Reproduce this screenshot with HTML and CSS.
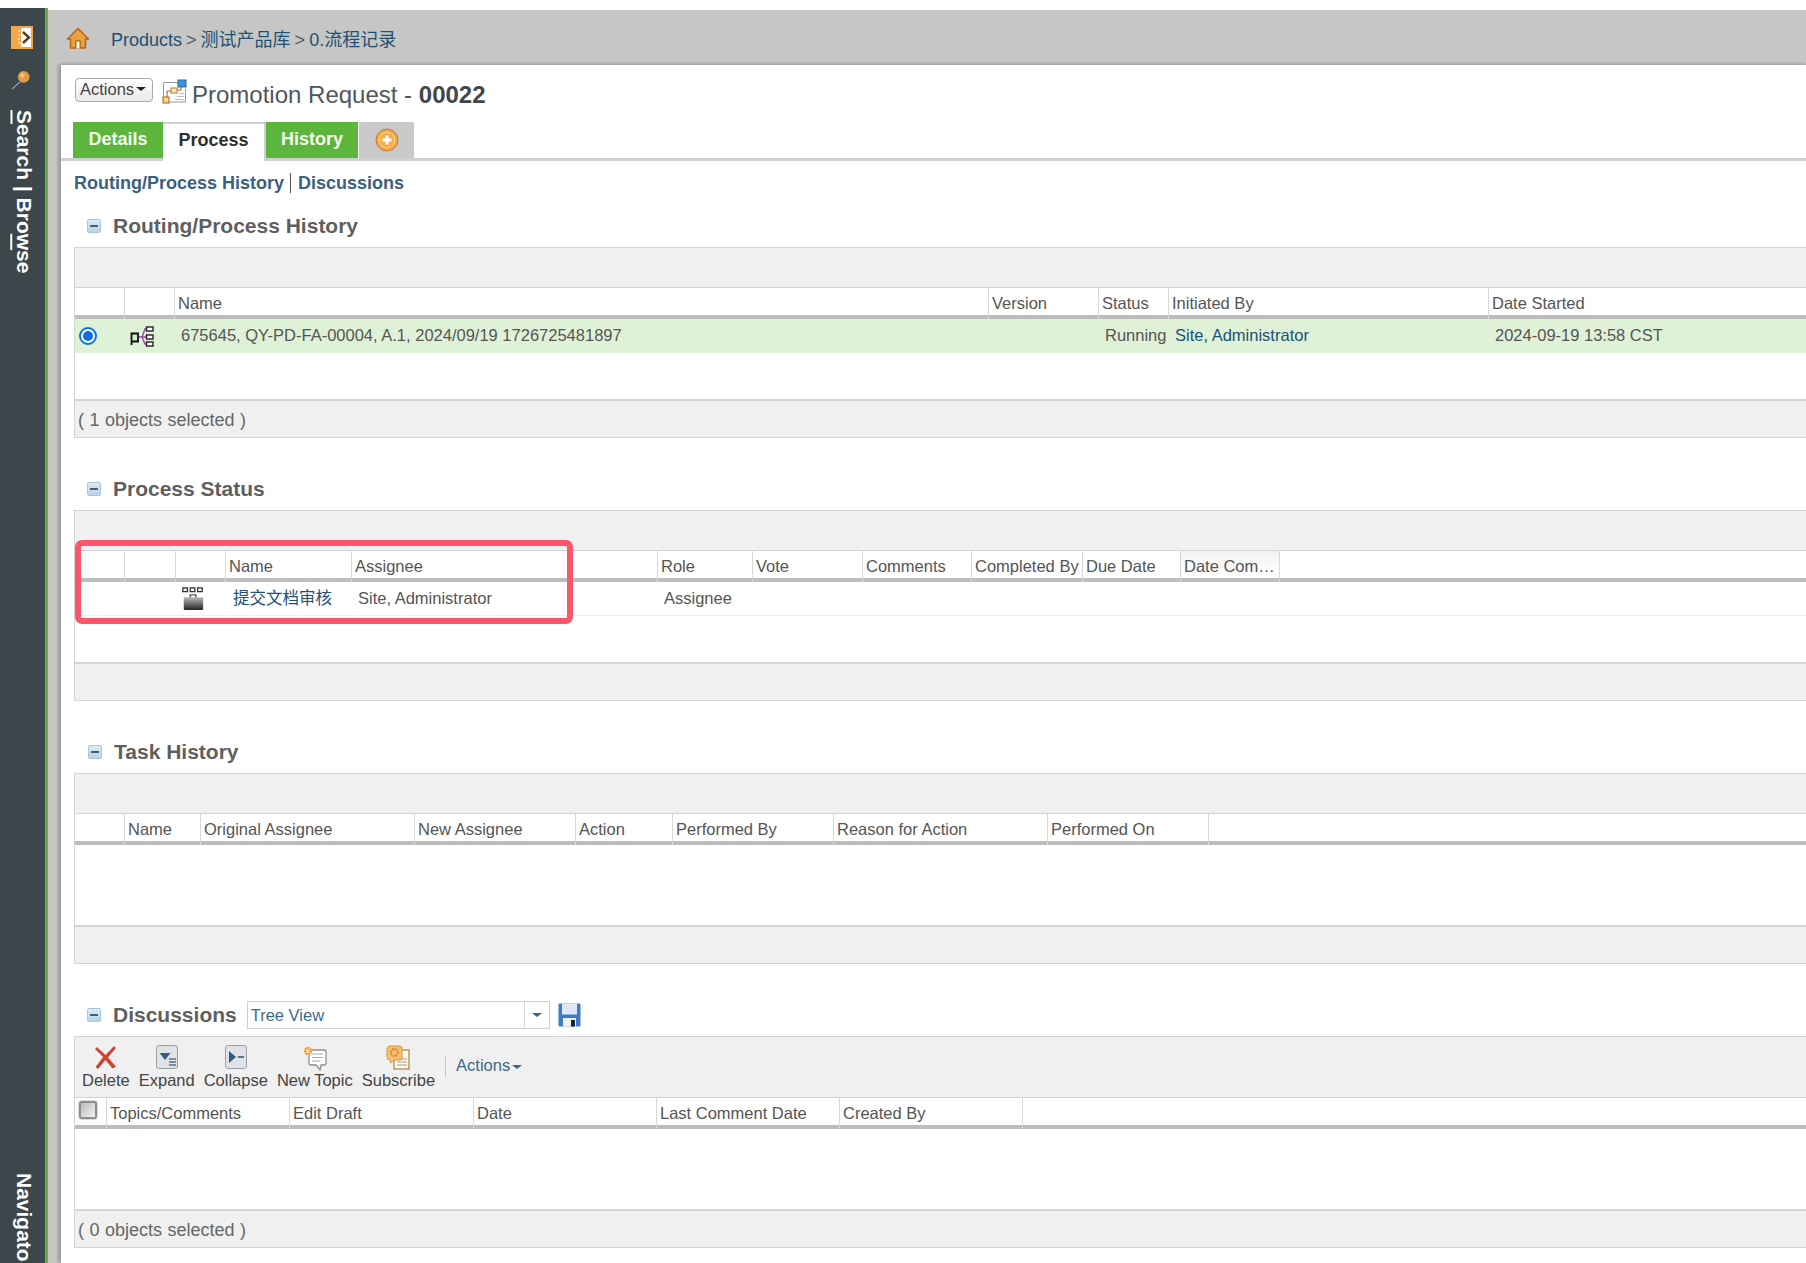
FILE: index.html
```html
<!DOCTYPE html>
<html lang="en">
<head>
<meta charset="utf-8">
<title>Promotion Request - 00022</title>
<link rel="stylesheet" href="styles.css">
</head>
<body>
<div class="app">
  <aside class="rail">
    <svg class="rail-icon" width="22" height="23" viewBox="0 0 22 23"><rect width="22" height="23" fill="#f2a649"/><rect x="10" y="2" width="10" height="19" fill="#fff"/><path d="M12 6l6 5.500-6 5.500" fill="none" stroke="#5a3b12" stroke-width="2.400"/><path d="M8 4v15" stroke="#fff" stroke-width="1" stroke-dasharray="2 2"/></svg>
    <svg class="rail-pin" width="20" height="20" viewBox="0 0 22 22"><path d="M10 13L1 21" stroke="#a9adae" stroke-width="1.200"/><circle cx="14" cy="7.500" r="6.500" fill="#e39a43"/><circle cx="12.500" cy="6" r="2.500" fill="#f4c27f"/></svg>
    <div class="rail-text"><u>S</u>earch | Bro<u>w</u>se</div>
    <div class="rail-text rail-nav">Navigator</div>
  </aside>
  <div class="shell">
    <header class="crumbs">
      <svg class="home" width="24" height="24" viewBox="0 0 24 24"><path d="M12 2.500L1.500 13h3v9h5.500v-7h4v7h5.500v-9h3z" fill="#e8a33f" stroke="#b5651a" stroke-width="1.500" stroke-linejoin="round"/><path d="M10 22v-7h4v7" fill="#fff7e8" stroke="#b5651a"/></svg>
      <nav class="crumb-text"><a>Products</a> <span>&gt;</span> <a>测试产品库</a> <span>&gt;</span> <a>0.流程记录</a></nav>
    </header>
    <main class="sheet">
      <div class="title-row">
        <button class="actions-btn">Actions<i class="caret dark"></i></button>
        <svg class="title-icon" width="25" height="25" viewBox="0 0 25 25"><path d="M1.500 3.500h17M1.500 3.500v19M23.500 10v13h-22" fill="none" stroke="#9a9a9a"/><path d="M13 20.500h9M15 17.500h7M17 14.500h5" stroke="#bbb"/><rect x="16" y="1" width="8" height="7" fill="#3e92d8" stroke="#27669e"/><rect x="9" y="9" width="6" height="5" fill="#fbe3b8" stroke="#b9772a"/><rect x="1" y="18" width="6" height="6" fill="#f9d693" stroke="#a8651a"/><path d="M19 8v3h-4M9 12H5v6" fill="none" stroke="#8a6a3a"/></svg>
        <h1 class="title">Promotion Request - <b>00022</b></h1>
      </div>
      <div class="tabs">
        <a class="tab green tab-details">Details</a>
        <a class="tab active tab-process">Process</a>
        <a class="tab green tab-history">History</a>
        <a class="tab add"><svg width="24" height="24" viewBox="0 0 24 24"><circle cx="12" cy="12" r="11" fill="#f2a23f" stroke="#cf7f2a"/><circle cx="12" cy="12" r="8" fill="#f7ae4a" stroke="#ffd9a0"/><path d="M12 7.500v9M7.500 12h9" stroke="#fff" stroke-width="3"/></svg></a>
      </div>
      <div class="anchors"><a>Routing/Process History</a><a>Discussions</a></div>

      <section class="sec first">
        <h2 class="sec-head"><i class="minus"></i>Routing/Process History</h2>
        <div class="grid-box">
          <div class="toolbar"></div>
          <div class="row head cols-route">
            <div></div><div></div><div>Name</div><div>Version</div><div>Status</div><div>Initiated By</div><div class="fill">Date Started</div>
          </div>
          <div class="row data selected cols-route">
            <div class="cell-c"><i class="radio"></i></div>
            <div class="cell-c"><svg width="24" height="22" viewBox="0 0 24 22"><path d="M8 12h4l3-8h2M12 12h5M12 12l3 7h2" fill="none" stroke="#9a3fa8" stroke-width="1.300"/><path d="M1.500 20V8.500H8v8H1.500" fill="#cfeecb" stroke="#111" stroke-width="1.800"/><rect x="16.500" y="2" width="6.500" height="4" fill="#fff" stroke="#222" stroke-width="1.400"/><rect x="16.500" y="10" width="6.500" height="4" fill="#fff" stroke="#222" stroke-width="1.400"/><rect x="16.500" y="17" width="6.500" height="4" fill="#fff" stroke="#222" stroke-width="1.400"/></svg></div>
            <div>675645, QY-PD-FA-00004, A.1, 2024/09/19 1726725481897</div><div></div><div>Running</div><div><a>Site, Administrator</a></div><div>2024-09-19 13:58 CST</div>
          </div>
          <div class="blank b48"></div>
          <div class="foot">( 1 objects selected )</div>
        </div>
      </section>

      <section class="sec">
        <h2 class="sec-head"><i class="minus"></i>Process Status</h2>
        <div class="grid-box">
          <div class="toolbar"></div>
          <div class="row head cols-status">
            <div></div><div></div><div></div><div>Name</div><div>Assignee</div><div>Role</div><div>Vote</div><div>Comments</div><div>Completed By</div><div>Due Date</div><div class="clip">Date Com…</div><div class="fill"></div>
          </div>
          <div class="row data plain cols-status">
            <div></div><div></div>
            <div class="cell-c"><svg width="24" height="24" viewBox="0 0 26 26"><g fill="#fff" stroke="#333" stroke-width="1.400"><rect x="2" y="1" width="5" height="4"/><rect x="10" y="1" width="5" height="4"/><rect x="18" y="1" width="5" height="4"/></g><path d="M10 12V8.500h6V12" fill="none" stroke="#555" stroke-width="1.500"/><defs><linearGradient id="bag" x1="0" y1="0" x2="0" y2="1"><stop offset="0" stop-color="#bbb"/><stop offset="1" stop-color="#222"/></linearGradient></defs><rect x="3" y="11" width="21" height="14" rx="1.500" fill="url(#bag)"/></svg></div>
            <div class="link-cell"><a>提交文档审核</a></div><div>Site, Administrator</div><div>Assignee</div><div></div><div></div><div></div><div></div><div></div><div class="fill"></div>
          </div>
          <div class="blank b48"></div>
          <div class="foot"></div>
          <div class="mark"></div>
        </div>
      </section>

      <section class="sec">
        <h2 class="sec-head task"><i class="minus"></i>Task History</h2>
        <div class="grid-box">
          <div class="toolbar"></div>
          <div class="row head cols-task">
            <div></div><div>Name</div><div>Original Assignee</div><div>New Assignee</div><div>Action</div><div>Performed By</div><div>Reason for Action</div><div>Performed On</div><div class="fill"></div>
          </div>
          <div class="blank b82"></div>
          <div class="foot"></div>
        </div>
      </section>

      <section class="sec">
        <div class="sec-head disc">
          <h2 class="disc-title"><i class="minus"></i>Discussions</h2>
          <div class="combo"><span>Tree View</span><b><i class="caret blue"></i></b></div>
          <svg class="save" width="23" height="24" viewBox="0 0 23 24"><path d="M.5 1.500a1 1 0 0 1 1-1h20a1 1 0 0 1 1 1v21a1 1 0 0 1-1 1h-20a1 1 0 0 1-1-1z" fill="#3f7cc4"/><rect x="4" y=".5" width="15" height="11" fill="#dfe9f6"/><rect x="5" y="15" width="13" height="8.500" fill="#eef3fa"/><rect x="13" y="17" width="4" height="6.500" fill="#15233a"/></svg>
        </div>
        <div class="grid-box">
          <div class="toolbar tools">
            <a class="tool"><svg width="24" height="24" viewBox="0 0 24 24"><path d="M3 2.500l8.500 8L20 1.500l1.500 1.500-8 9.500 8 9-3 1.500-7-8.500-7.500 9L2 22l7.500-10L1.500 4z" fill="#d8412f" stroke="#a6281c" stroke-width=".6"/></svg>Delete</a>
            <a class="tool"><svg width="24" height="24" viewBox="0 0 24 24"><rect x="1.500" y=".5" width="21" height="23" rx="2.500" fill="#dfe2e6" stroke="#9aa0a5"/><path d="M4.500 8h11l-5.500 7z" fill="#2f5b85"/><path d="M14 14h7M14 17h7M14 20h7" stroke="#5d7186" stroke-width="1.400"/></svg>Expand</a>
            <a class="tool"><svg width="24" height="24" viewBox="0 0 24 24"><rect x="1.500" y=".5" width="21" height="23" rx="2.500" fill="#dfe2e6" stroke="#9aa0a5"/><path d="M5 6l7 6-7 6z" fill="#2f5b85"/><path d="M14 12h6" stroke="#5d7186" stroke-width="2"/></svg>Collapse</a>
            <a class="tool"><svg width="26" height="26" viewBox="0 0 26 26"><path d="M7 5h15a2 2 0 0 1 2 2v11a2 2 0 0 1-2 2h-3l-1 5-4-5H9a2 2 0 0 1-2-2z" fill="#fff" stroke="#8f8f8f" stroke-width="1.300"/><path d="M10 9h11M10 12.500h11M10 16h8" stroke="#a8a8a8"/><circle cx="6" cy="6" r="4.500" fill="#fbd9a9"/><circle cx="6" cy="6" r="3" fill="none" stroke="#ef7f26" stroke-width="2" stroke-dasharray="1.500 1.200"/></svg>New Topic</a>
            <a class="tool"><svg width="24" height="25" viewBox="0 0 24 25"><rect x="8" y="5" width="15" height="19" fill="#fdf8ea" stroke="#9b6a2a"/><path d="M11 14h10M11 17h10M11 20h10" stroke="#a89f86"/><path d="M3 1h11a2 2 0 0 1 2 2v10a2 2 0 0 1-2 2H8l-3 3-1-3a3 3 0 0 1-3-3V3z" fill="#f3c26f" stroke="#d69a3f"/><circle cx="8.500" cy="7.500" r="3.500" fill="none" stroke="#e86f2a" stroke-width="2" stroke-dasharray="1.500 1.200"/></svg>Subscribe</a>
            <span class="tool-sep"></span>
            <a class="tool-menu">Actions<i class="caret blue"></i></a>
          </div>
          <div class="row head cols-disc">
            <div class="cell-check"><i class="check"></i></div><div>Topics/Comments</div><div>Edit Draft</div><div>Date</div><div>Last Comment Date</div><div>Created By</div><div class="fill"></div>
          </div>
          <div class="blank b82"></div>
          <div class="foot">( 0 objects selected )</div>
        </div>
      </section>
    </main>
  </div>
</div>
</body>
</html>
```
FILE: styles.css
```css
* { box-sizing: border-box; }
html, body { margin: 0; height: 1263px; overflow: hidden; background: #fff; }
body { font-family: "Liberation Sans", "Noto Sans CJK SC", sans-serif; font-size: 16.5px; color: #555; }
a { color: #1d5177; text-decoration: none; }

.app { display: flex; height: 1263px; padding-top: 8px; }

.rail { width: 48px; flex: none; background: #3c474b; border-right: 3px solid #63b044; display: flex; flex-direction: column; align-items: center; overflow: hidden; padding-top: 18px; }
.rail-icon { flex: none; margin-left: -2px; }
.rail-pin { flex: none; margin: 21px 0 0 -3px; }
.rail-text { writing-mode: vertical-rl; color: #fff; font-weight: 700; font-size: 21px; line-height: 24px; white-space: nowrap; flex: none; margin: 20px 0 0 2px; }
.rail-text.rail-nav { margin-top: 900px; }

.shell { flex: 1; min-width: 0; margin-top: 2px; background: #c6c6c4; display: flex; flex-direction: column; }
.crumbs { height: 55px; flex: none; display: flex; align-items: center; padding-left: 18px; }
.home { flex: none; }
.crumb-text { margin-left: 21px; font-size: 18px; color: #4a5a66; word-spacing: -1px; }
.sheet { flex: 1; min-height: 0; margin-left: 13px; background: #fff; box-shadow: -3px 0 3px #9d9d9d, 0 -1px 3px #9d9d9d; overflow: hidden; }

.title-row { display: flex; align-items: center; height: 46px; padding: 10px 0 0 14px; }
.actions-btn { width: 78px; height: 24px; padding: 0 0 2px 4px; margin: -6px 0 0 0; display: flex; align-items: center; font: 16.5px "Liberation Sans", sans-serif; color: #444; background: linear-gradient(#fff, #e9e9e9); border: 1px solid #aaa; border-radius: 4px; }
.title-icon { margin: -4px 0 0 9px; flex: none; }
.title { margin: 4px 0 0 5px; font-size: 24px; font-weight: 400; color: #50565c; }
.title b { color: #40464c; }

.caret { display: inline-block; width: 0; height: 0; border: 5px solid transparent; border-bottom-width: 0; border-top-width: 4px; margin-left: 2px; vertical-align: middle; }
.caret.dark { border-top-color: #222; }
.caret.blue { border-top-color: #2f6a92; }

.tabs { display: flex; align-items: flex-end; height: 39px; margin-top: 11px; padding-left: 12px; border-bottom: 3px solid #d0d0d0; }
.tab { height: 36px; display: flex; align-items: center; justify-content: center; font-weight: 700; font-size: 18px; padding-bottom: 2px; }
.tab.green { background: #5cb53c; color: #f4fbef; }
.tab-details { width: 90px; }
.tab-process { width: 103px; }
.tab-history { width: 92px; }
.tab.active { height: 39px; margin-bottom: -3px; background: #fff; color: #2f2f2f; border: 2px solid #d0d0d0; border-bottom: 0; border-left: 0; padding-bottom: 5px; }
.tab.add { width: 55px; margin-left: 1px; background: #c9c9c9; padding-bottom: 0; }

.anchors { display: flex; align-items: center; height: 22px; margin: 11px 0 0 13px; font-weight: 700; font-size: 18px; }
.anchors a { color: #3c6080; line-height: 20px; padding-right: 6px; }
.anchors a + a { border-left: 1px solid #555; padding-left: 7px; }

.sec { margin: 0 -400px 0 13px; padding-top: 36px; }
.sec.first { padding-top: 17px; }
.sec-head { display: flex; align-items: center; height: 30px; margin: 0 0 6px; padding-left: 13px; font-size: 21px; font-weight: 700; color: #5f5f5f; }
.sec-head.task { padding-left: 14px; }
.minus { width: 14px; height: 14px; margin-right: 12px; flex: none; border-radius: 2px; background: linear-gradient(#dcebf5, #b8d3e6); border: 1px solid #a9c6dc; display: flex; align-items: center; justify-content: center; position: relative; }
.minus::after { content: ""; width: 8px; height: 2px; background: #3f5f7a; }

.grid-box { position: relative; border: 1px solid #d4d4d4; border-right: 0; }
.toolbar { height: 40px; background: #f0f0f0; border-bottom: 1px solid #d4d4d4; }
.row { display: grid; }
.row > div { padding: 0 3px; white-space: nowrap; overflow: hidden; }
.head { height: 31px; background: #fff; }
.head > div { height: 31px; margin-right: 1px; padding-top: 5px; line-height: 20px; border-bottom: 4px solid #bdbdbd; box-shadow: 1px 0 0 #d8d8d8; overflow: visible; }
.data { height: 34px; line-height: 32px; }
.data > div { padding: 0 6px; }
.selected { background: #dff2d7; }
.plain { line-height: 33px; border-bottom: 1px solid #eee; }
.cell-c { display: flex; align-items: center; justify-content: flex-start; padding: 0 0 0 5px !important; }
.link-cell { padding-left: 7px !important; }
.clip { background: linear-gradient(#f2f2f2, #fff); }
.head > .fill { margin-right: 0; box-shadow: none; }
.blank { background: #fff; border-bottom: 2px solid #d4d4d4; }
.b48 { height: 48px; }
.b82 { height: 82px; }
.foot { height: 36px; line-height: 39px; padding-left: 3px; background: #f0f0f0; font-size: 18px; color: #666; word-spacing: 0.5px; overflow: hidden; }

.cols-route { grid-template-columns: 50px 50px 814px 110px 70px 320px 1fr; }
.cols-status { grid-template-columns: 50px 51px 50px 126px 306px 95px 110px 109px 111px 98px 99px 1fr; }
.cols-task { grid-template-columns: 50px 76px 214px 161px 97px 161px 214px 161px 1fr; }
.cols-disc { grid-template-columns: 32px 183px 184px 183px 183px 183px 1fr; }

.cell-c .radio { margin-left: -1px; }
.radio { width: 18px; height: 18px; border-radius: 50%; background: #fff; border: 2px solid #0a6fe8; position: relative; display: block; }
.radio::after { content: ""; position: absolute; inset: 2px; border-radius: 50%; background: #0a6fe8; }

.mark { position: absolute; left: 0; top: 29px; width: 498px; height: 84px; border: 6px solid #fb566b; border-radius: 7px; }

.disc { margin-bottom: 6px; }
.disc-title { display: flex; align-items: center; margin: 0; font-size: 21px; color: #5f5f5f; }
.combo { display: flex; width: 303px; height: 28px; margin-left: 10px; border: 1px solid #d0d0d0; font-size: 16.5px; font-weight: 400; color: #3c6a8c; }
.combo span { flex: 1; line-height: 27px; padding-left: 3px; }
.combo b { width: 25px; border-left: 1px solid #d8d8d8; display: flex; align-items: center; justify-content: center; }
.combo .caret { margin: 0; }
.save { margin-left: 8px; flex: none; }

.tools { height: 61px; display: flex; gap: 9px; align-items: flex-start; padding: 8px 0 0 7px; }
.tool { display: flex; flex-direction: column; align-items: center; justify-content: flex-end; height: 44px; color: #444; line-height: 18px; }
.tool svg { margin-bottom: auto; flex: none; }
.tool-sep { width: 1px; height: 21px; margin: 11px 0 0 1px; background: #a9cbe6; }
.tool-menu { margin: 10px 0 0 1px; color: #3c6a8c; line-height: 20px; }
.cell-check { padding: 0 !important; }
.check { display: block; width: 18px; height: 18px; margin: 3px 0 0 4px; border: 2px solid #8e8e8e; border-radius: 2px; background: linear-gradient(135deg, #bbb, #f4f4f4); outline: 1px solid #ddd; }
```
